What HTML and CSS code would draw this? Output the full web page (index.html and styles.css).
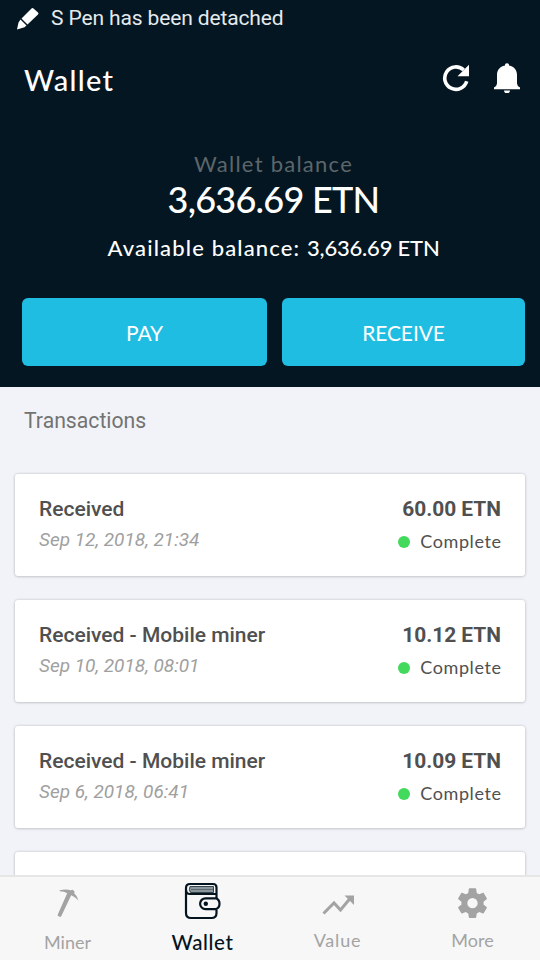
FILE: index.html
```
<!DOCTYPE html>
<html lang="en">
<head>
<meta charset="utf-8">
<title>Wallet</title>
<link rel="stylesheet" href="styles.css">
</head>
<body>
<div class="app">
  <header class="top">
    <div class="status">
      <svg class="pen" width="24" height="24" viewBox="0 0 24 24"><path fill="#fff" d="M15.500 1.500q1-.8 2 .1l4.500 4q1 1 0 2L11.500 17.500 5.500 11.500zM4.500 12.500l6 6-2 1.700-7.500 2.300 1.500-7z"/></svg>
      <span class="status-text">S Pen has been detached</span>
    </div>
    <div class="titlebar">
      <h1 class="title">Wallet</h1>
      <svg class="refresh" width="28" height="28" viewBox="0 0 28 28"><path d="M24.700 17.200A11.200 11.200 0 1 1 21.700 6" fill="none" stroke="#fff" stroke-width="3.600"/><path d="M27 .8V12.300H15.500z" fill="#fff"/></svg>
      <svg class="bell" width="28" height="32" viewBox="0 0 28 32"><path fill="#fff" d="M12 3.500a2.300 2.300 0 0 1 4 0v1C21.500 5.500 24 9.500 24 14v8.500q0 2.300 3 4v1.800H1v-1.800q3-1.700 3-4V14C4 9.500 6.500 5.500 12 4.500zM11 29.500h6a3 2.800 0 0 1-6 0z"/></svg>
    </div>
    <div class="balance">
      <div class="bal-label">Wallet balance</div>
      <div class="bal-value">3,636.69 ETN</div>
      <div class="bal-avail"><span class="avail-label">Available balance: </span><span class="avail-value">3,636.69 ETN</span></div>
    </div>
    <div class="actions">
      <div class="btn">PAY</div>
      <div class="btn">RECEIVE</div>
    </div>
  </header>
  <main class="list">
    <h2 class="section">Transactions</h2>
    <article class="card">
      <div class="info"><div class="name">Received</div><div class="date">Sep 12, 2018, 21:34</div></div>
      <div class="sum"><div class="amount">60.00 ETN</div><div class="state"><i class="dot"></i><span>Complete</span></div></div>
    </article>
    <article class="card">
      <div class="info"><div class="name">Received - Mobile miner</div><div class="date">Sep 10, 2018, 08:01</div></div>
      <div class="sum"><div class="amount">10.12 ETN</div><div class="state"><i class="dot"></i><span>Complete</span></div></div>
    </article>
    <article class="card">
      <div class="info"><div class="name">Received - Mobile miner</div><div class="date">Sep 6, 2018, 06:41</div></div>
      <div class="sum"><div class="amount">10.09 ETN</div><div class="state"><i class="dot"></i><span>Complete</span></div></div>
    </article>
    <article class="card"></article>
  </main>
  <nav class="tabs">
    <div class="tab low">
      <svg width="40" height="40" viewBox="0 0 40 40"><path fill="#a3a3a3" d="M12.500 8.500Q19 7 23.500 8.500l2-.5 2 2-.5 1.500q3 2.500 4.300 7.200Q27.500 14.700 24 13.500L14 34.500l-1 .7-2.500-1.200.2-1.500L20 11.500Q17 9.500 12.500 9.500z" transform="translate(-.8 -.3)"/></svg>
      <span class="t-miner">Miner</span>
    </div>
    <div class="tab low active">
      <svg width="40" height="40" viewBox="0 0 40 40"><g fill="none" stroke="#04141f" stroke-width="2.200"><path d="M33.500 16V5.500Q33.500 2 30 2H7Q3 2 3 6V31Q3 36 8 36H28.500Q33.500 36 33.500 31V27.500"/><path d="M3 8q0 4 4 4H33.500"/><path d="M33 16.300H22.500a5 5 0 0 0 0 10.800H33q3.500-1.500 3.500-5.400T33 16.300z" fill="#f7f7f7"/></g><path d="M7 4.500H30.500V10.500H7.500Q5.500 8 7 4.500z" fill="#8b969c" stroke="#34454e" stroke-width="1"/><path d="M8 7.500H30" stroke="#5b6a72"/><circle cx="22.800" cy="21.700" r="2.200" fill="#04141f"/></svg>
      <span class="t-wallet">Wallet</span>
    </div>
    <div class="tab">
      <svg width="40" height="40" viewBox="0 0 40 40"><path d="M5.500 31.500L16 21l6.500 7L32 16.500" fill="none" stroke="#a3a3a3" stroke-width="3"/><path d="M26.500 13.500H36V23z" fill="#a3a3a3"/></svg>
      <span class="t-value">Value</span>
    </div>
    <div class="tab">
      <svg width="40" height="40" viewBox="2.500 2 20 20"><path fill="#a3a3a3" d="M19.430 12.980c.04-.32.070-.64.070-.98s-.03-.66-.07-.98l2.110-1.650c.19-.15.240-.42.120-.64l-2-3.460c-.12-.22-.39-.3-.61-.22l-2.490 1c-.52-.4-1.080-.73-1.690-.98l-.38-2.650C14.460 2.180 14.250 2 14 2h-4c-.25 0-.46.180-.49.420l-.38 2.650c-.61.250-1.170.590-1.690.980l-2.490-1c-.23-.09-.49 0-.61.220l-2 3.460c-.13.220-.07.490.120.640l2.110 1.650c-.04.320-.07.650-.07.980s.03.660.070.980l-2.110 1.650c-.19.150-.24.420-.12.640l2 3.460c.12.220.390.300.610.220l2.490-1c.52.400 1.080.730 1.690.980l.38 2.650c.03.240.240.420.490.420h4c.25 0 .46-.18.490-.42l.38-2.650c.61-.25 1.170-.59 1.690-.98l2.490 1c.23.090.490 0 .61-.22l2-3.460c.12-.22.070-.49-.12-.64zM12 15.500a3.500 3.500 0 1 1 0-7 3.500 3.500 0 0 1 0 7z" transform="translate(3.370 3.700) scale(.74)"/></svg>
      <span class="t-more">More</span>
    </div>
  </nav>
</div>
</body>
</html>
```
FILE: styles.css
```
* { box-sizing: border-box; }
body { margin: 0; background: #f2f3f8; font-family: Roboto, sans-serif; }
.app { width: 540px; height: 960px; display: flex; flex-direction: column; overflow: hidden; }
.top { height: 387px; flex: none; background: #041621; color: #fff; font-family: Lato, sans-serif; }
.status { height: 37px; display: flex; align-items: center; padding-left: 16px; gap: 11px; }
.status-text { font-family: Roboto, sans-serif; font-size: 21px; line-height: 37px; color: #e4eaed; white-space: nowrap; letter-spacing: -.13px; }
.titlebar { height: 86px; display: flex; align-items: center; padding: 0 19px 0 24px; }
.title { margin: 0 auto 0 0; font-size: 29px; font-weight: 500; line-height: 88px; letter-spacing: 1.300px; }
.refresh { margin: 0 23px 5px 0; }
.bell { margin-bottom: 6px; }
.balance { padding-top: 27px; text-align: center; padding-left: 7px; white-space: nowrap; }
.bal-label { font-size: 22px; line-height: 28px; height: 27px; color: #5d666b; letter-spacing: 1.250px; }
.bal-value { font-size: 36px; line-height: 45px; height: 44px; letter-spacing: -.75px; font-weight: 500; }
.bal-avail { font-size: 22px; line-height: 53px; font-weight: 500; }
.avail-label { letter-spacing: 1.150px; }
.avail-value { letter-spacing: -.2px; }
.actions { display: grid; grid-template-columns: 245px 243px; gap: 15px; padding: 24px 0 0 22px; }
.btn { height: 68px; border-radius: 6px; background: #20bde2; display: flex; align-items: center; justify-content: center; font-size: 21px; letter-spacing: -.1px; }
.list { flex: 1; min-height: 0; overflow: hidden; padding: 0 15px; }
.section { margin: 0 0 20px 9px; font-size: 21.200px; font-weight: 400; line-height: 67px; color: #737373; }
.card { height: 102px; margin-bottom: 24px; border-radius: 3px; background: #fff; box-shadow: 0 0 3px rgba(0,0,0,.2), 0 1px 3px rgba(0,0,0,.1); padding: 18px 24px; display: flex; justify-content: space-between; color: #505050; }
.name { font-size: 21px; font-weight: 500; line-height: 34px; }
.date { font-size: 19px; font-style: italic; line-height: 28px; color: #a0a0a0; }
.sum { text-align: right; }
.amount { font-size: 20.900px; font-weight: 700; line-height: 34px; }
.state { font-family: Lato, sans-serif; font-size: 18px; line-height: 31px; display: flex; align-items: center; justify-content: flex-end; gap: 10px; letter-spacing: .6px; }
.state span { margin-right: -.6px; }
.dot { width: 12px; height: 12px; border-radius: 50%; background: #42d95c; }
.tabs { height: 85px; flex: none; display: grid; grid-template-columns: repeat(4, 135px); background: #f7f7f7; border-top: 2px solid #e6e6e7; font-family: Lato, sans-serif; color: #a3a3a3; }
.tab { display: flex; flex-direction: column; align-items: center; padding-top: 5px; font-size: 18px; line-height: 30px; }
.tab svg { margin-bottom: 3px; }
.low span { padding-top: 2px; }
.active { color: #04141f; font-size: 20.500px; font-weight: 500; letter-spacing: .6px; }
.t-value { letter-spacing: .8px; }
```
